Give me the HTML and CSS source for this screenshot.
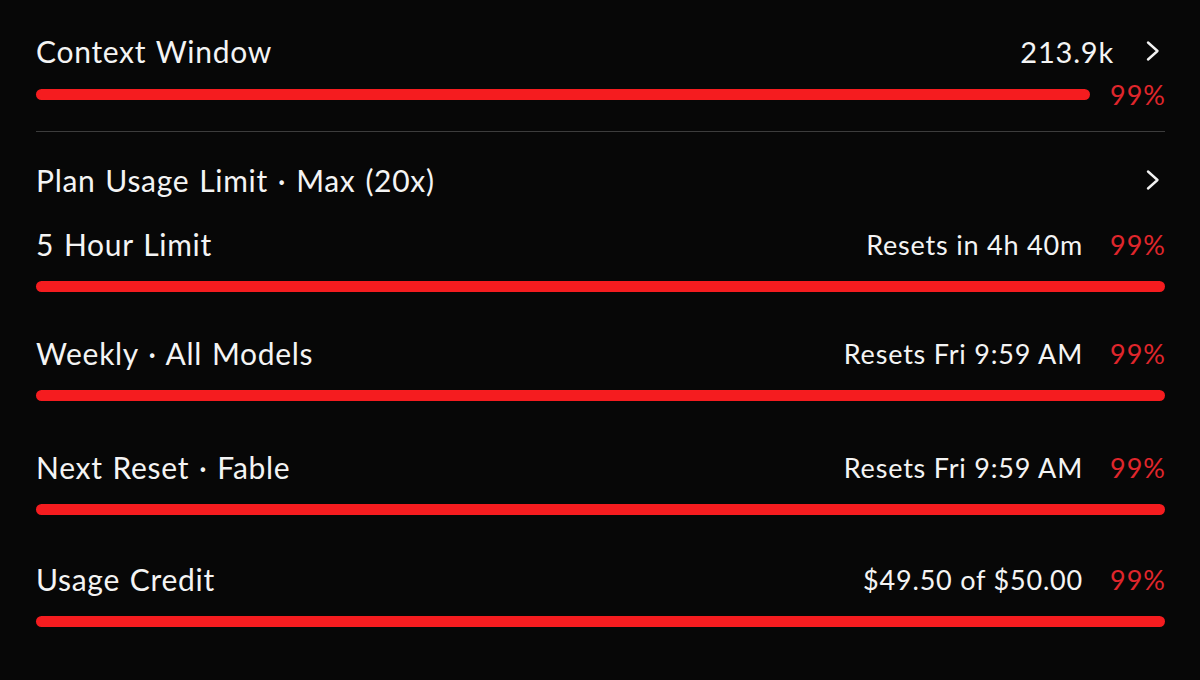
FILE: index.html
```html
<!DOCTYPE html>
<html>
<head>
<meta charset="utf-8">
<link rel="stylesheet" href="styles.css">
</head>
<body>
<main class="panel">
  <section class="context">
    <div class="row head">
      <span class="label">Context Window</span>
      <span class="right"><span class="value">213.9k</span><span class="chev"><svg width="14" height="22" viewBox="0 0 14 22"><path d="M2 2.5 L11.5 11 L2 19.5" fill="none" stroke="#f2f2f2" stroke-width="2.4" stroke-linecap="round" stroke-linejoin="round"/></svg></span></span>
    </div>
    <div class="barrow">
      <div class="track"><div class="fill" style="width:99%"></div></div>
      <span class="pct">99%</span>
    </div>
  </section>
  <hr class="divider">
  <section class="plan">
    <div class="row plan-head">
      <span class="label">Plan Usage Limit · Max (20x)</span>
      <span class="chev"><svg width="14" height="22" viewBox="0 0 14 22"><path d="M2 2.5 L11.5 11 L2 19.5" fill="none" stroke="#f2f2f2" stroke-width="2.4" stroke-linecap="round" stroke-linejoin="round"/></svg></span>
    </div>
    <div class="limit first">
      <div class="row">
        <span class="label">5 Hour Limit</span>
        <span class="right"><span class="meta">Resets in 4h 40m</span><span class="pct">99%</span></span>
      </div>
      <div class="bar"></div>
    </div>
    <div class="limit weekly">
      <div class="row">
        <span class="label">Weekly · All Models</span>
        <span class="right"><span class="meta">Resets Fri 9:59 AM</span><span class="pct">99%</span></span>
      </div>
      <div class="bar"></div>
    </div>
    <div class="limit next">
      <div class="row">
        <span class="label">Next Reset · Fable</span>
        <span class="right"><span class="meta">Resets Fri 9:59 AM</span><span class="pct">99%</span></span>
      </div>
      <div class="bar"></div>
    </div>
    <div class="limit">
      <div class="row">
        <span class="label">Usage Credit</span>
        <span class="right"><span class="meta">$49.50 of $50.00</span><span class="pct">99%</span></span>
      </div>
      <div class="bar"></div>
    </div>
  </section>
</main>
</body>
</html>
```
FILE: styles.css
```css
html, body {
  margin: 0;
  padding: 0;
  background: #070707;
}
body {
  width: 1200px;
  height: 680px;
  overflow: hidden;
  font-family: Lato, "Open Sans", "DejaVu Sans", sans-serif;
  color: #f4f4f4;
}
.panel {
  padding: 31px 35px 0 36px;
}
.row {
  display: flex;
  justify-content: space-between;
  align-items: center;
  height: 40px;
}
.label {
  font-size: 30px;
  letter-spacing: 0.7px;
  word-spacing: 1.5px;
}
.right {
  display: flex;
  align-items: center;
}
.value {
  font-size: 29px;
  letter-spacing: 0.8px;
}
.chev {
  display: flex;
  align-items: center;
  margin-left: 32px;
  margin-right: 5px;
  width: 14px;
}
.barrow {
  display: flex;
  align-items: center;
  margin-top: 7px;
}
.track {
  flex: 1;
  height: 11px;
}
.fill {
  height: 11px;
  border-radius: 6px;
  background: #f51c1f;
}
.barrow .pct {
  width: 65px;
  text-align: right;
}
.pct {
  font-size: 27px;
  letter-spacing: 1px;
  color: #e0262c;
  margin-right: -1px;
}
.meta {
  font-size: 27px;
  letter-spacing: 0.8px;
  margin-right: 27px;
}
.divider {
  border: 0;
  height: 1px;
  background: #3c3c3c;
  margin: 20px 0 0 0;
}
.plan-head {
  margin-top: 28px;
}
.limit.first {
  margin-top: 24px;
}
.limit {
  margin-top: 44px;
}
.limit.weekly {
  margin-top: 41px;
}
.limit.next {
  margin-top: 46px;
}
.bar {
  height: 11px;
  border-radius: 6px;
  background: #f51c1f;
  margin-top: 17px;
}
```
